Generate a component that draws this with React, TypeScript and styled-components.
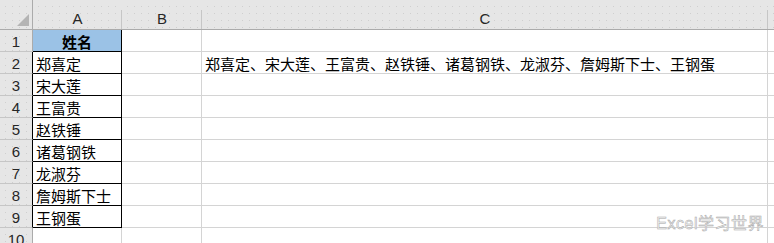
import styled, { createGlobalStyle } from "styled-components";

const GRID = "#d4d4d4";
const HEAD_LINE = "#ababab";
const CJK = `"Noto Sans CJK SC", "Noto Sans", sans-serif`;

const names = ["郑喜定", "宋大莲", "王富贵", "赵铁锤", "诸葛钢铁", "龙淑芬", "詹姆斯下士", "王钢蛋"];
const ROW_COUNT = 10;

const GlobalStyle = createGlobalStyle`
  html, body {
    margin: 0;
    padding: 0;
    background: #ffffff;
  }
`;

const App: React.FC = () => {
  const rows = Array.from(Array(ROW_COUNT).keys()).map((i) => i + 1);

  return (
    <Sheet>
      <GlobalStyle />
      <Grid>
        <Corner>
          <CornerTriangle />
        </Corner>
        <ColHead>A</ColHead>
        <ColHead>B</ColHead>
        <ColHead>C</ColHead>
        <ColHead $last />

        {rows.map((row) => {
          const boxed = row <= 9;
          const name = row >= 2 && row <= 9 ? names[row - 2] : "";
          return [
            <RowHead key={`h${row}`} $boxed={row >= 2 && row <= 9}>
              {row}
            </RowHead>,
            <NameCell key={`a${row}`} $boxed={boxed} $title={row === 1}>
              {row === 1 ? "姓名" : name}
            </NameCell>,
            <Cell key={`b${row}`} />,
            <Cell key={`c${row}`}>
              {row === 2 ? names.join("、") : ""}
            </Cell>,
            <Cell key={`d${row}`} $last />,
          ];
        })}
      </Grid>
      <Watermark>Excel学习世界</Watermark>
    </Sheet>
  );
};
export default App;

const Sheet = styled.div`
  position: relative;
  width: 774px;
  height: 243px;
  overflow: hidden;
  background: #ffffff;
`;

const Grid = styled.div`
  display: grid;
  grid-template-columns: 33px 89px 80px 566px 1fr;
  grid-template-rows: 30px repeat(${ROW_COUNT}, 22px);
`;

const headBg = `
  background-color: #e6e6e6;
  background-image: radial-gradient(circle, #cfcfcf 0.7px, transparent 1px);
  background-size: 7px 7px;
  background-position: 2px 3px;
`;

const Corner = styled.div`
  position: relative;
  ${headBg}
  border-right: 1px solid ${HEAD_LINE};
  border-bottom: 1px solid ${HEAD_LINE};
  box-sizing: border-box;
`;

const CornerTriangle = styled.div`
  position: absolute;
  right: 3px;
  bottom: 3px;
  width: 0;
  height: 0;
  border-left: 12px solid transparent;
  border-bottom: 12px solid #b4b4b4;
`;

const ColHead = styled.div<{ $last?: boolean }>`
  position: relative;
  ${headBg}
  border-bottom: 1px solid ${HEAD_LINE};
  box-sizing: border-box;
  display: flex;
  align-items: flex-end;
  justify-content: center;
  padding-bottom: 2px;
  font-family: "Liberation Sans", Arial, sans-serif;
  font-size: 15px;
  color: #262626;

  &::after {
    content: "";
    display: ${(p) => (p.$last ? "none" : "block")};
    position: absolute;
    right: 0;
    top: 10px;
    bottom: 0;
    width: 1px;
    background: #c6c6c6;
  }
`;

const RowHead = styled.div<{ $boxed?: boolean }>`
  ${headBg}
  border-right: 1px solid ${(p) => (p.$boxed ? "#000000" : HEAD_LINE)};
  border-bottom: 1px solid #c6c6c6;
  box-sizing: border-box;
  display: flex;
  align-items: center;
  justify-content: center;
  padding-top: 1px;
  font-family: "Liberation Sans", Arial, sans-serif;
  font-size: 15px;
  color: #262626;
`;

const Cell = styled.div<{ $last?: boolean }>`
  border-right: ${(p) => (p.$last ? "none" : `1px solid ${GRID}`)};
  border-bottom: 1px solid ${GRID};
  box-sizing: border-box;
  display: flex;
  align-items: center;
  padding: 1px 3px 0;
  font-family: ${CJK};
  font-size: 15px;
  color: #000000;
  white-space: nowrap;
  overflow: visible;
`;

const NameCell = styled(Cell)<{ $boxed?: boolean; $title?: boolean }>`
  border-right: 1px solid ${(p) => (p.$boxed ? "#000000" : GRID)};
  border-bottom: 1px solid ${(p) => (p.$boxed ? "#000000" : GRID)};
  background: ${(p) => (p.$title ? "#9bc2e6" : "transparent")};
  justify-content: ${(p) => (p.$title ? "center" : "flex-start")};
  font-weight: ${(p) => (p.$title ? 700 : 400)};
`;

const Watermark = styled.div`
  position: absolute;
  right: 10px;
  bottom: 9px;
  font-family: "Liberation Sans", ${CJK};
  font-size: 16px;
  letter-spacing: 0.5px;
  color: #f4f4f4;
  -webkit-text-stroke: 0.5px #a8a8a8;
  white-space: nowrap;
`;
